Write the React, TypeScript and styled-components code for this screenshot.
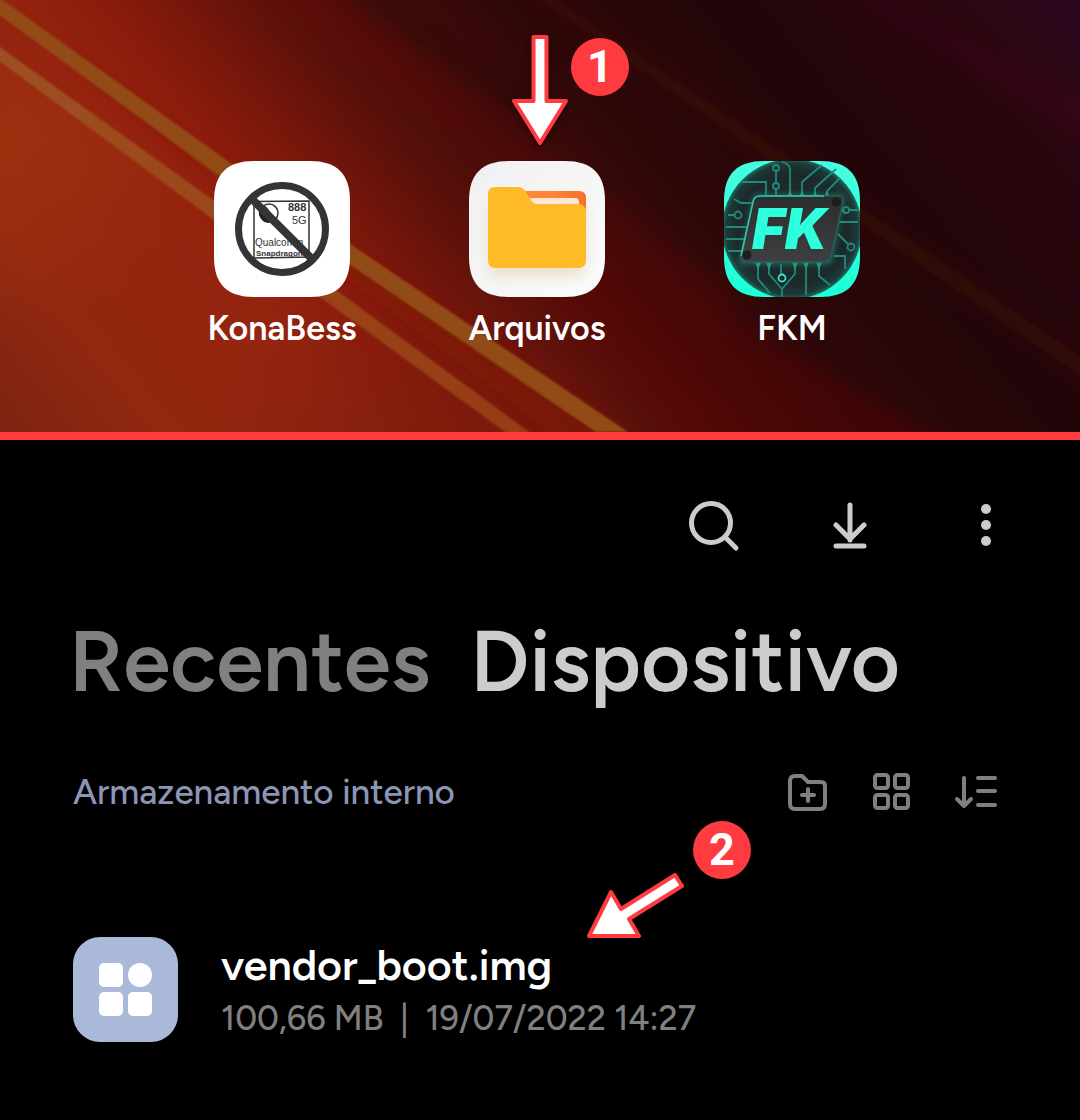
import React from "react";
import styled, { createGlobalStyle } from "styled-components";

const GlobalStyle = createGlobalStyle`
  *, *::before, *::after { box-sizing: border-box; }
  body { margin: 0; background: #000; }
  body, button { font-family: "Google Sans", Figtree, Lato, "Open Sans", sans-serif; font-weight: 600; }
`;

const Page = styled.main`
  display: flex;
  flex-direction: column;
  min-height: 100vh;
  background: #000;
`;

const HomeScreen = styled.section`
  position: relative;
  overflow: hidden;
  padding: 161px 6px 81px 0;
  border-bottom: 8px solid #ff3b3f;
  background: #2a0609;
`;

const Wallpaper = styled.svg`
  position: absolute;
  inset: 0;
  width: 100%;
  height: 100%;
`;

const AppGrid = styled.div`
  position: relative;
  display: flex;
  justify-content: center;
  gap: 99px;
`;

const AppShortcut = styled.button`
  position: relative;
  display: flex;
  flex-direction: column;
  align-items: center;
  gap: 10px;
  width: 156px;
  padding: 0;
  border: 0;
  background: none;
  color: #fff;
  font-size: 34px;
  line-height: 44px;
  cursor: pointer;
`;

const AppIcon = styled.svg`
  display: block;
  width: 136px;
  height: 136px;
`;

const Step = styled.span<{ $x: number; $y: number }>`
  position: absolute;
  left: ${(p) => p.$x}px;
  top: ${(p) => p.$y}px;
  display: flex;
  align-items: center;
  justify-content: center;
  width: 58px;
  height: 58px;
  border-radius: 50%;
  background: #ff3b3f;
  color: #fff;
  font: 700 45px/58px Roboto, sans-serif;
`;

const Pointer = styled.svg<{ $x: number; $y: number }>`
  position: absolute;
  left: ${(p) => p.$x}px;
  top: ${(p) => p.$y}px;
  fill: #fff;
  stroke: #ff3b3f;
  stroke-width: 4;
  stroke-linejoin: round;
  filter: drop-shadow(0 2px 3px rgba(0, 0, 0, 0.5));
`;

const FilesScreen = styled.section`
  flex: 1;
  padding: 51px 66px 78px 73px;
`;

const Toolbar = styled.div`
  display: flex;
  justify-content: flex-end;
  gap: 80px;
  color: #ccc;
`;

const IconButton = styled.button<{ $size: number }>`
  display: flex;
  width: ${(p) => p.$size}px;
  height: ${(p) => p.$size}px;
  padding: 0;
  border: 0;
  background: none;
  color: inherit;
  cursor: pointer;

  svg {
    width: 100%;
    height: 100%;
    overflow: visible;
    fill: none;
    stroke: currentColor;
    stroke-linecap: round;
    stroke-linejoin: round;
  }
`;

const Tabs = styled.nav`
  display: flex;
  gap: 40px;
  margin: 54px 0 0 -4px;
`;

const Tab = styled.button<{ $active?: boolean }>`
  padding: 0;
  border: 0;
  background: none;
  color: ${(p) => (p.$active ? "#ccc" : "#808080")};
  font-size: 85px;
  line-height: 120px;
  cursor: pointer;
`;

const SectionBar = styled.div`
  display: flex;
  align-items: center;
  justify-content: space-between;
  margin-top: 49px;
`;

const Crumb = styled.a`
  color: #8d95b5;
  font-size: 35px;
  font-weight: 500;
  line-height: 44px;
  text-decoration: none;
`;

const ViewActions = styled.div`
  display: flex;
  gap: 40px;
  padding-right: 16px;
  color: #808080;
`;

const FileRow = styled.article`
  position: relative;
  display: flex;
  align-items: center;
  gap: 43px;
  margin-top: 123px;
`;

const FileIcon = styled.svg`
  flex: none;
  width: 105px;
  height: 105px;
`;

const FileText = styled.div`
  display: flex;
  flex-direction: column;
  gap: 5px;
`;

const FileName = styled.h2`
  margin: 0;
  color: #fff;
  font-size: 43px;
  font-weight: 600;
  line-height: 54px;
`;

const FileMeta = styled.p`
  margin: 0;
  color: #808080;
  font-size: 34px;
  font-weight: 500;
  line-height: 44px;
  white-space: pre;
`;

const SQUIRCLE =
  "M0 40C0 13 13 0 40 0H96C123 0 136 13 136 40V96C136 123 123 136 96 136H40C13 136 0 123 0 96Z";

function WallpaperArt() {
  return (
    <Wallpaper viewBox="0 0 1080 432" preserveAspectRatio="xMidYMid slice" aria-hidden="true">
      <defs>
        <linearGradient id="sky" gradientUnits="userSpaceOnUse" x1="0" y1="432" x2="853" y2="-277">
          <stop offset="0" stopColor="#7c2311" />
          <stop offset="0.11" stopColor="#912810" />
          <stop offset="0.25" stopColor="#95240f" />
          <stop offset="0.31" stopColor="#8d1d0c" />
          <stop offset="0.375" stopColor="#76160b" />
          <stop offset="0.443" stopColor="#59100a" />
          <stop offset="0.52" stopColor="#400b09" />
          <stop offset="0.61" stopColor="#2d0708" />
          <stop offset="0.75" stopColor="#220509" />
          <stop offset="0.87" stopColor="#27050c" />
          <stop offset="0.94" stopColor="#2c0815" />
          <stop offset="1" stopColor="#290622" />
        </linearGradient>
        <radialGradient id="amber" gradientUnits="userSpaceOnUse" cx="10" cy="140" r="190">
          <stop offset="0" stopColor="#a5360f" stopOpacity="0.6" />
          <stop offset="1" stopColor="#a5360f" stopOpacity="0" />
        </radialGradient>
        <radialGradient id="dusk" gradientUnits="userSpaceOnUse" cx="430" cy="470" r="220">
          <stop offset="0" stopColor="#731a0d" stopOpacity="0.6" />
          <stop offset="1" stopColor="#731a0d" stopOpacity="0" />
        </radialGradient>
        <linearGradient id="goldLower" x1="0" y1="0" x2="1" y2="1">
          <stop offset="0" stopColor="#9e5122" />
          <stop offset="1" stopColor="#963c15" />
        </linearGradient>
        <filter id="soft" x="-20%" y="-20%" width="140%" height="140%">
          <feGaussianBlur stdDeviation="9" />
        </filter>
        <filter id="edge">
          <feGaussianBlur stdDeviation="1" />
        </filter>
      </defs>
      <rect width="1080" height="432" fill="url(#sky)" />
      <rect width="1080" height="432" fill="url(#dusk)" />
      <path d="M0 55L215 211L530 432H0Z" fill="url(#amber)" />
      <g filter="url(#soft)">
        <path d="M0 0L232 166L640 440H560L218 180Z" fill="#8a1a0e" opacity="0.35" />
        <path d="M310 -20L760 310H700L240 -20Z" fill="#841a0c" opacity="0.14" />
        <path d="M370 -20L560 110L540 130L320 -20Z" fill="#140303" opacity="0.12" />
        <path d="M530 -20L1100 370V390L510 -20Z" fill="#5a1a0c" opacity="0.35" />
        <path d="M560 220L980 460H700L540 300Z" fill="#6a0d0a" opacity="0.28" />
        <path d="M860 -20L1100 110V150L820 -20Z" fill="#4a0d18" opacity="0.25" />
      </g>
      <g filter="url(#edge)">
        <path d="M-10 -9L232 164L628 432H596L218 175L-10 8Z" fill="#924b17" />
        <path d="M-10 40L220 205L532 434H508L210 217L-10 54Z" fill="url(#goldLower)" />
      </g>
    </Wallpaper>
  );
}

function KonaBessIcon() {
  return (
    <AppIcon viewBox="0 0 136 136" aria-hidden="true">
      <path d={SQUIRCLE} fill="#fff" />
      <g fill="none" stroke="#333" strokeWidth="1.5">
        <path d="M40 40.500L95 40V96L40 97Z" />
        <circle cx="55" cy="52" r="9" />
      </g>
      <path d="M48 43Q56 47 56 54T58 61Q49 64 45 54Q44 47 48 43Z" fill="#222" />
      <g fill="#333" fontFamily='"Liberation Sans", sans-serif'>
        <text x="74" y="50" fontSize="11" fontWeight="700">888</text>
        <text x="78" y="63" fontSize="11" fontWeight="400">5G</text>
        <text x="41" y="85" fontSize="10" fontWeight="400">Qualcomm</text>
        <text x="42" y="95" fontSize="8" fontWeight="700">Snapdragon</text>
      </g>
      <circle cx="68" cy="68" r="43.500" fill="none" stroke="#333435" strokeWidth="7" />
      <path d="M38 38L98 98" stroke="#333435" strokeWidth="8" />
    </AppIcon>
  );
}

function FilesIcon() {
  return (
    <AppIcon viewBox="0 0 136 136" aria-hidden="true">
      <defs>
        <linearGradient id="tile" x1="0" y1="0" x2="1" y2="1">
          <stop offset="0" stopColor="#f0f0f2" />
          <stop offset="1" stopColor="#fbfbfb" />
        </linearGradient>
        <linearGradient id="backFolder" x1="0" y1="0" x2="1" y2="0">
          <stop offset="0.500" stopColor="#ff8536" />
          <stop offset="1" stopColor="#f5702a" />
        </linearGradient>
        <filter id="folderShade" x="-30%" y="-30%" width="160%" height="160%">
          <feGaussianBlur stdDeviation="7" />
        </filter>
      </defs>
      <path d={SQUIRCLE} fill="url(#tile)" />
      <rect x="20" y="45" width="96" height="70" rx="8" fill="#d8bd84" opacity="0.4" filter="url(#folderShade)" />
      <path d="M50 30H110Q117 30 117 37V60H50Z" fill="url(#backFolder)" />
      <path d="M58 37H106Q110 37 110 41V50H58Z" fill="#fde6d6" />
      <path
        d="M26 26H49Q54 26 57 31L62 39Q64 43 69 43H109Q117 43 117 51V99Q117 107 109 107H27Q19 107 19 99V33Q19 26 26 26Z"
        fill="#ffba28"
      />
    </AppIcon>
  );
}

function FkmIcon() {
  return (
    <AppIcon viewBox="0 0 136 136" aria-hidden="true">
      <defs>
        <clipPath id="fkTile"><path d={SQUIRCLE} /></clipPath>
        <radialGradient id="fkDisc">
          <stop offset="0" stopColor="#283130" />
          <stop offset="0.8" stopColor="#1c2928" />
          <stop offset="0.94" stopColor="#1b3a38" />
          <stop offset="1" stopColor="#1c6e62" />
        </radialGradient>
        <linearGradient id="fkTeal" x1="0" y1="0" x2="0" y2="1">
          <stop offset="0" stopColor="#46ffdf" />
          <stop offset="1" stopColor="#1cffd8" />
        </linearGradient>
        <linearGradient id="fkChip" x1="0" y1="0" x2="0" y2="1">
          <stop offset="0" stopColor="#2c2d2f" />
          <stop offset="1" stopColor="#3e3f41" />
        </linearGradient>
        <filter id="fkGlow" x="-20%" y="-20%" width="140%" height="140%">
          <feGaussianBlur stdDeviation="3" />
        </filter>
      </defs>
      <g clipPath="url(#fkTile)">
        <rect width="136" height="136" fill="url(#fkTeal)" />
        <circle cx="68" cy="68" r="70" fill="url(#fkDisc)" />
        <path d="M30 34H120L107 103H16Z" fill="#22a08f" opacity="0.6" filter="url(#fkGlow)" />
        <g fill="none" stroke="#208a7c" strokeWidth="1.800">
          <path d="M52 10V22M52 28V34M66 34V8Q66 3 58 1" />
          <path d="M78 34V21L98 4M91 34V27L112 8M103 34V30L116 17" />
          <path d="M18 21H42V34M10 38L17 42H28M4 54H10M2 66H24M2 78H20M4 90H18" />
          <path d="M118 50H121M125 49H134M115 61H134M114 73L124 83M110 95H121V108" />
          <path d="M34 103V118L46 132M45 103V113L58 128V136M71 103V113L58 128M57 103V113M82 103V134M95 103V115L106 124" />
          <circle cx="52" cy="7" r="3" /><circle cx="52" cy="25" r="3" />
          <circle cx="14" cy="54" r="3.500" /><circle cx="122" cy="49" r="3" />
          <circle cx="127" cy="86" r="3.500" />
          <circle cx="58" cy="117" r="3.500" stroke="#38e8cf" fill="#182625" />
        </g>
        <g fill="#229a8a">
          <path d="M63 36L66 29L69 36ZM75 36L78 30L81 36ZM88 36L91 30L94 36ZM100 36L103 30L106 36Z" />
          <path d="M31 101H37L34 109ZM42 101H48L45 109ZM68 101H74L71 109ZM79 101H85L82 109ZM92 101H98L95 109Z" />
        </g>
        <path d="M36 35H114Q120 35 119 41L107 95Q105 101 99 101H22Q16 101 17 95L29 41Q30 35 36 35Z" fill="url(#fkChip)" stroke="#2b5b53" strokeWidth="1.500" />
        <path d="M17 95L29 41Q30 35 36 35H100" fill="none" stroke="#30cbb6" strokeWidth="1.500" />
        <circle cx="112" cy="41" r="4.500" fill="#1c1d1e" />
        <circle cx="23" cy="94" r="4.500" fill="#1c1d1e" />
        <text x="28" y="88" fontFamily="Inter, sans-serif" fontSize="56" fontWeight="900" fontStyle="italic" fill="#2effdc">FK</text>
      </g>
    </AppIcon>
  );
}

export default function App() {
  return (
    <>
      <GlobalStyle />
      <Page>
        <HomeScreen>
          <WallpaperArt />
          <AppGrid>
            <AppShortcut type="button"><KonaBessIcon />KonaBess</AppShortcut>
            <AppShortcut type="button">
              <FilesIcon />
              Arquivos
              <Pointer $x={51} $y={-129} width="60" height="116" viewBox="0 0 60 116" aria-hidden="true">
                <path d="M23.500 5H36.500V69H56L30 111L4 69H23.500Z" />
              </Pointer>
              <Step $x={112} $y={-123}>1</Step>
            </AppShortcut>
            <AppShortcut type="button"><FkmIcon />FKM</AppShortcut>
          </AppGrid>
        </HomeScreen>

        <FilesScreen>
          <Toolbar>
            <IconButton $size={56} type="button" aria-label="Pesquisar">
              <svg viewBox="0 0 56 56" strokeWidth="5">
                <circle cx="25" cy="32" r="19.500" />
                <path d="M39.500 46.500L50 57" />
              </svg>
            </IconButton>
            <IconButton $size={56} type="button" aria-label="Downloads">
              <svg viewBox="0 0 56 56" strokeWidth="5">
                <path d="M28 14V49M14 34L28 48L42 34M14 55H42" />
              </svg>
            </IconButton>
            <IconButton $size={56} type="button" aria-label="Mais opções">
              <svg viewBox="0 0 56 56">
                <g fill="currentColor" stroke="none">
                  <circle cx="28" cy="18" r="5" />
                  <circle cx="28" cy="34" r="5" />
                  <circle cx="28" cy="50" r="5" />
                </g>
              </svg>
            </IconButton>
          </Toolbar>

          <Tabs>
            <Tab type="button">Recentes</Tab>
            <Tab type="button" $active>Dispositivo</Tab>
          </Tabs>

          <SectionBar>
            <Crumb href="#interno">Armazenamento interno</Crumb>
            <ViewActions>
              <IconButton $size={44} type="button" aria-label="Nova pasta">
                <svg viewBox="0 0 44 44" strokeWidth="4">
                  <path d="M9 6H16L22 12H35Q39 12 39 16V34Q39 39 34 39H9Q4 39 4 34V11Q4 6 9 6ZM22 19V31M16 25H28" />
                </svg>
              </IconButton>
              <IconButton $size={44} type="button" aria-label="Grade">
                <svg viewBox="0 0 44 44" strokeWidth="4">
                  <rect x="5" y="5" width="13" height="13" rx="2.500" />
                  <rect x="25" y="5" width="13" height="13" rx="2.500" />
                  <rect x="5" y="25" width="13" height="13" rx="2.500" />
                  <rect x="25" y="25" width="13" height="13" rx="2.500" />
                </svg>
              </IconButton>
              <IconButton $size={44} type="button" aria-label="Ordenar">
                <svg viewBox="0 0 44 44" strokeWidth="4">
                  <path d="M10 8V36M3 29L10 36L17 29M24 8H41M24 21H41M24 35H41" />
                </svg>
              </IconButton>
            </ViewActions>
          </SectionBar>

          <FileRow>
            <FileIcon viewBox="0 0 105 105" aria-hidden="true">
              <rect width="105" height="105" rx="27" fill="#aab9da" />
              <g fill="#fff">
                <rect x="26" y="26" width="24" height="24" rx="5" />
                <circle cx="67" cy="38" r="12" />
                <rect x="26" y="55" width="24" height="24" rx="5" />
                <rect x="55" y="55" width="24" height="24" rx="5" />
              </g>
            </FileIcon>
            <FileText>
              <FileName>vendor_boot.img</FileName>
              <FileMeta>100,66 MB  |  19/07/2022 14:27</FileMeta>
            </FileText>
            <Pointer $x={512} $y={-68} width="100" height="72" viewBox="0 0 100 72" aria-hidden="true">
              <path d="M90 6L97 17L44 50L54 67H4L26 23L36 40Z" />
            </Pointer>
            <Step $x={620} $y={-116}>2</Step>
          </FileRow>
        </FilesScreen>
      </Page>
    </>
  );
}
